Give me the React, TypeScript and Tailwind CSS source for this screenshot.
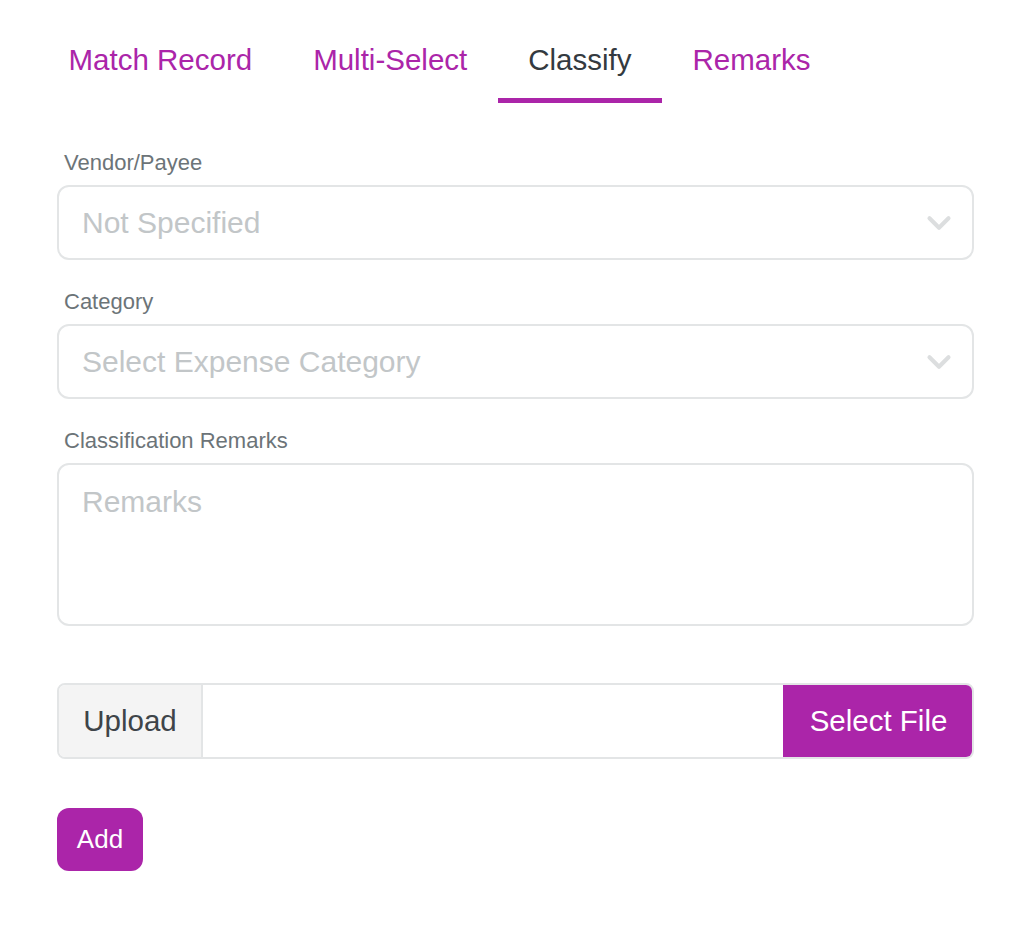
import { ChevronDown } from 'lucide-react'

const TABS = ['Match Record', 'Multi-Select', 'Classify', 'Remarks']

function SelectBox({ placeholder }: { placeholder: string }) {
  return (
    <div className="flex h-[75px] items-center justify-between rounded-[12px] border-2 border-[#e3e5e6] bg-white pl-[23px] pr-[14px]">
      <span className="text-[30px] text-[#c2c6c8]">{placeholder}</span>
      <ChevronDown size={38} strokeWidth={2.6} className="text-[#dcdedf]" />
    </div>
  )
}

export default function App() {
  const active = 'Classify'

  return (
    <div className="min-h-[928px] bg-white font-['Liberation_Sans',Arial,sans-serif]">
      {/* tabs */}
      <div className="flex pl-[38px] pt-[40px]">
        {TABS.map((t) => (
          <div
            key={t}
            className={
              t === active
                ? 'border-b-[5px] border-[#ab25a9] px-[30.5px] pb-[18px] text-[29.5px] leading-[40px] text-[#343a40]'
                : 'border-b-[5px] border-transparent px-[30.5px] pb-[18px] text-[29.5px] leading-[40px] text-[#ab25a9]'
            }
          >
            {t}
          </div>
        ))}
      </div>

      {/* form */}
      <div className="ml-[57px] w-[917px] pt-[48px]">
        <p className="mb-[10px] pl-[7px] text-[22px] leading-[24px] text-[#6c7478]">Vendor/Payee</p>
        <SelectBox placeholder="Not Specified" />

        <p className="mb-[10px] mt-[30px] pl-[7px] text-[22px] leading-[24px] text-[#6c7478]">Category</p>
        <SelectBox placeholder="Select Expense Category" />

        <p className="mb-[10px] mt-[30px] pl-[7px] text-[22px] leading-[24px] text-[#6c7478]">Classification Remarks</p>
        <div className="h-[163px] rounded-[12px] border-2 border-[#e3e5e6] bg-white px-[23px] pt-[14px]">
          <span className="text-[30px] text-[#c2c6c8]">Remarks</span>
        </div>

        {/* upload */}
        <div className="mt-[57px] flex h-[76px] overflow-hidden rounded-[8px] border-2 border-[#e3e5e6]">
          <div className="flex w-[144px] items-center justify-center border-r-2 border-[#e3e5e6] bg-[#f4f4f4] text-[29.5px] text-[#3e4449]">
            Upload
          </div>
          <div className="flex-1 bg-white" />
          <div className="-my-[2px] -mr-[2px] flex w-[191px] items-center justify-center bg-[#ab25a9] text-[29.5px] text-white">
            Select File
          </div>
        </div>

        <button
          type="button"
          className="mt-[49px] flex h-[63px] w-[86px] items-center justify-center rounded-[12px] bg-[#ab25a9] text-[26px] text-white"
        >
          Add
        </button>
      </div>
    </div>
  )
}
